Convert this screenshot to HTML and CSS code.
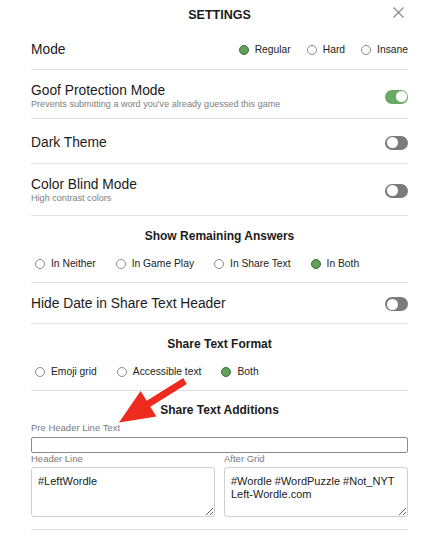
FILE: index.html
```html
<!DOCTYPE html>
<html lang="en">
<head>
    <meta charset="UTF-8">
    <meta name="viewport" content="width=device-width, initial-scale=1.0">
    <title>Settings</title>
    <link rel="stylesheet" href="styles.css">
</head>
<body>
<div class="modal">
    <div class="modal-head">
        <div class="title">SETTINGS</div>
        <div class="close">
            <svg width="11" height="11" viewBox="0 0 11 11"><path d="M0.5 0.5 L10.5 10.5 M10.5 0.5 L0.5 10.5" stroke="#8a8a8a" stroke-width="1.2" fill="none"/></svg>
        </div>
    </div>

    <div class="setting row-mode">
        <div class="name">Mode</div>
        <div class="radios mode">
            <div class="opt"><span class="radio on"></span>Regular</div>
            <div class="opt"><span class="radio"></span>Hard</div>
            <div class="opt"><span class="radio"></span>Insane</div>
        </div>
    </div>

    <div class="setting row-goof">
        <div>
            <div class="name">Goof Protection Mode</div>
            <div class="desc">Prevents submitting a word you've already guessed this game</div>
        </div>
        <div class="toggle on"></div>
    </div>

    <div class="setting row-dark">
        <div class="name">Dark Theme</div>
        <div class="toggle"></div>
    </div>

    <div class="setting row-cb">
        <div>
            <div class="name">Color Blind Mode</div>
            <div class="desc">High contrast colors</div>
        </div>
        <div class="toggle"></div>
    </div>

    <div class="section">
        <div class="heading">Show Remaining Answers</div>
        <div class="radios">
            <div class="opt"><span class="radio"></span>In Neither</div>
            <div class="opt"><span class="radio"></span>In Game Play</div>
            <div class="opt"><span class="radio"></span>In Share Text</div>
            <div class="opt"><span class="radio on"></span>In Both</div>
        </div>
    </div>

    <div class="setting row-hide">
        <div class="name">Hide Date in Share Text Header</div>
        <div class="toggle"></div>
    </div>

    <div class="section">
        <div class="heading">Share Text Format</div>
        <div class="radios">
            <div class="opt"><span class="radio"></span>Emoji grid</div>
            <div class="opt"><span class="radio"></span>Accessible text</div>
            <div class="opt"><span class="radio on"></span>Both</div>
        </div>
    </div>

    <div class="additions">
        <div class="heading">Share Text Additions</div>
        <div class="label pre">Pre Header Line Text</div>
        <input type="text" class="pre-input">
        <div class="pair">
            <div>
                <div class="label">Header Line</div>
                <textarea>#LeftWordle</textarea>
            </div>
            <div>
                <div class="label">After Grid</div>
                <textarea>#Wordle #WordPuzzle #Not_NYT
Left-Wordle.com</textarea>
            </div>
        </div>
    </div>
</div>

<!-- annotation arrow on top of the screenshot -->
<svg class="arrow" viewBox="0 0 430 536">
    <polygon points="183.2,378 186.8,384 150.3,406.7 156.4,416.4 119,422.5 140.6,391 146.7,400.7" fill="#ee2a1e"/>
</svg>
</body>
</html>
```

FILE: styles.css
```css
* {
    box-sizing: border-box;
}
body {
    margin: 0;
    position: relative;
    background: #fff;
    color: #1b1b1b;
    font-family: "Liberation Sans", Arial, sans-serif;
}
.modal {
    padding: 0 22px 0 31px;
}
.modal-head {
    height: 29px;
    display: grid;
    grid-template-columns: 1fr auto 1fr;
    align-items: center;
}
.title {
    grid-column: 2;
    font-size: 12.5px;
    font-weight: bold;
}
.close {
    justify-self: end;
    display: flex;
    margin-right: 4px;
    margin-top: -4px;
}
.setting {
    display: flex;
    align-items: center;
    justify-content: space-between;
    border-bottom: 1px solid #e2e2e2;
}
.name {
    font-size: 13.8px;
    line-height: 16px;
}
.desc {
    font-size: 9.1px;
    line-height: 11px;
    color: #7e7e7e;
}
.row-mode {
    height: 41px;
    padding-top: 2px;
}
.row-goof {
    height: 49px;
    padding: 13px 0 8px;
}
.row-dark {
    height: 45px;
    padding-top: 3px;
}
.row-cb {
    height: 52px;
    padding-top: 2px;
}
.row-hide {
    height: 41px;
    padding-top: 2px;
}
.section {
    height: 67px;
    padding-top: 12px;
    border-bottom: 1px solid #e2e2e2;
}
.heading {
    text-align: center;
    font-size: 12px;
    font-weight: bold;
    line-height: 16px;
}
.radios {
    display: flex;
    align-items: center;
    font-size: 10.3px;
    line-height: 16px;
    color: #222;
}
.section .radios {
    margin-top: 12px;
}
.opt {
    display: flex;
    align-items: center;
    margin-right: 16px;
}
.radios.mode .opt {
    margin-right: 12px;
}
.radios.mode .opt:last-child {
    margin-right: 0;
}
.radio {
    width: 10px;
    height: 10px;
    margin: 0 6px 0 4px;
    border-radius: 50%;
    border: 1px solid #8c8c8c;
    background: #fff;
}
.radio.on {
    background: #62a05c;
    border: 1.5px solid #3c6b37;
}
.toggle {
    position: relative;
    width: 23px;
    height: 14px;
    border-radius: 7px;
    background: #7b7b7b;
    flex-shrink: 0;
}
.toggle::after {
    content: "";
    position: absolute;
    top: 1.5px;
    left: 1.5px;
    width: 11px;
    height: 11px;
    border-radius: 50%;
    background: #fff;
}
.toggle.on {
    background: #6aaa64;
}
.toggle.on::after {
    left: 10.5px;
}
.additions {
    padding: 11px 0 12px;
    border-bottom: 1px solid #e2e2e2;
}
.label {
    font-size: 9.5px;
    line-height: 12px;
    color: #7a7a7a;
}
.label.pre {
    margin-top: 4px;
}
.pre-input {
    display: block;
    width: 100%;
    height: 16px;
    margin: 3px 0 0;
    border: 1px solid #8a8a8a;
    border-radius: 2px;
    padding: 0 4px;
}
.pair {
    display: grid;
    grid-template-columns: 1fr 1fr;
    gap: 9px;
}
.pair textarea {
    display: block;
    width: 100%;
    height: 50px;
    margin-top: 2px;
    padding: 7px 6px;
    border: 1px solid #cfcfcf;
    border-radius: 3px;
    font-family: "Liberation Sans", Arial, sans-serif;
    font-size: 11px;
    line-height: 12.5px;
    color: #1b1b1b;
}
.arrow {
    position: absolute;
    top: 0;
    left: 0;
    width: 430px;
    height: 536px;
    pointer-events: none;
}
```
